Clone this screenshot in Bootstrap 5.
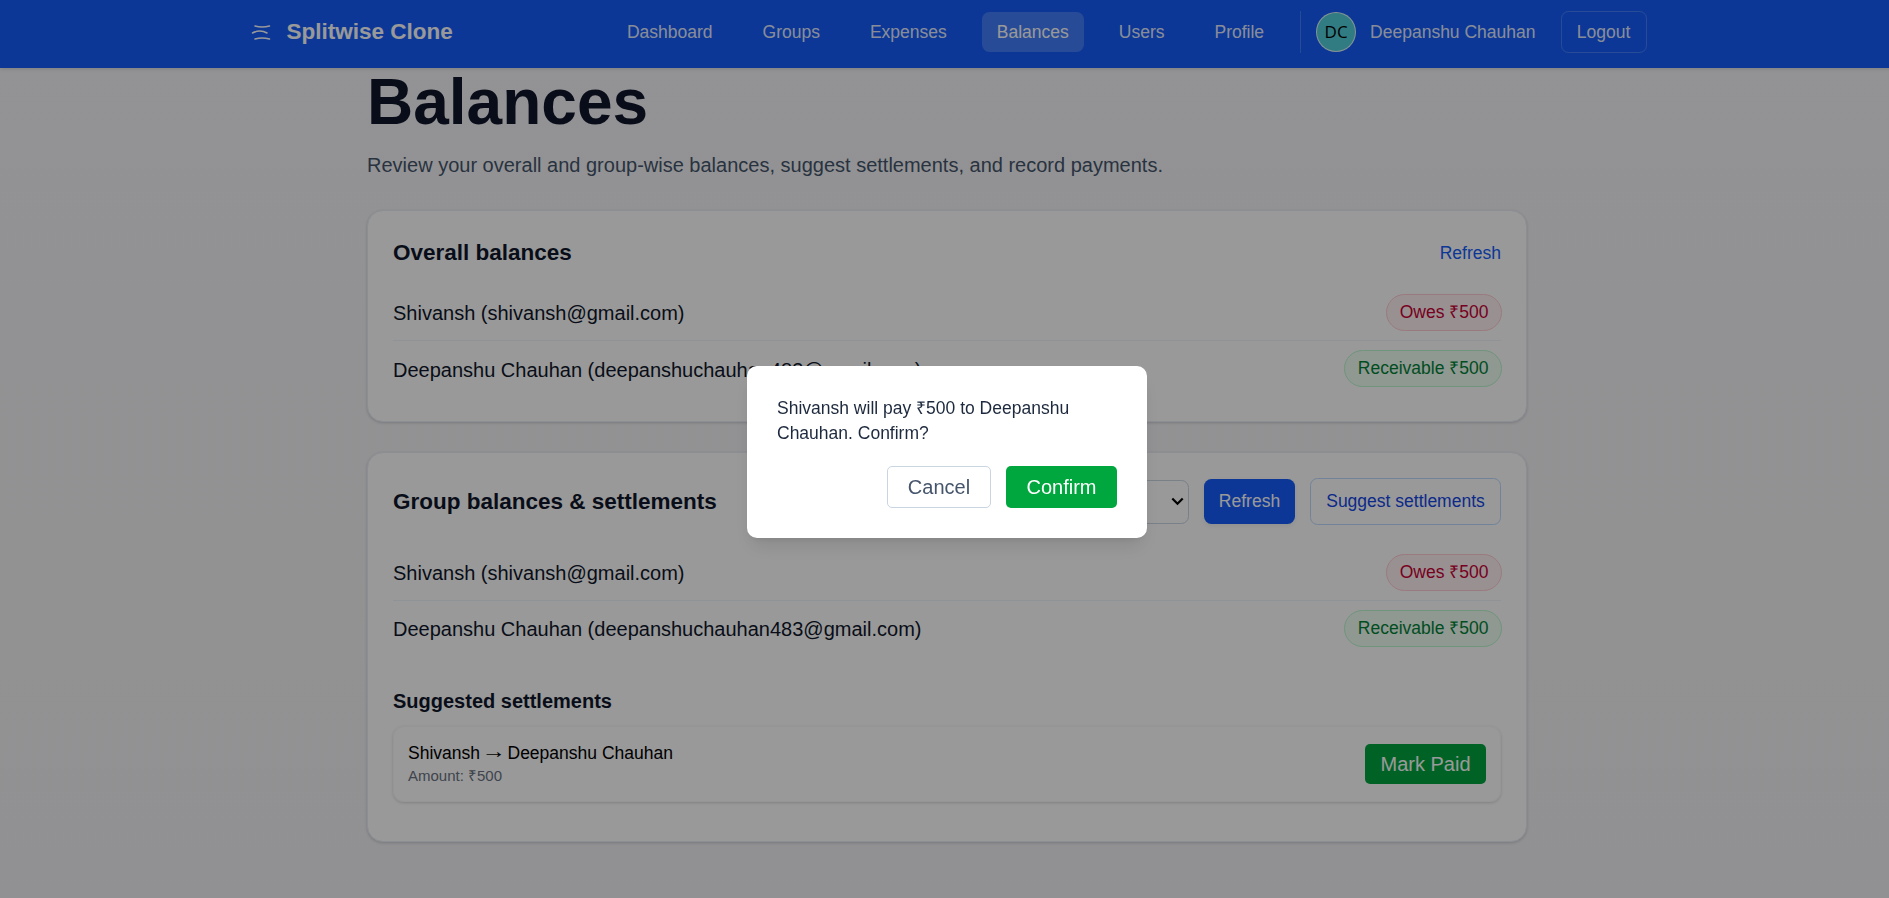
<!DOCTYPE html>
<html lang="en">
<head>
<meta charset="utf-8">
<meta name="viewport" content="width=device-width, initial-scale=1">
<title>Splitwise Clone</title>
<link href="https://cdn.jsdelivr.net/npm/bootstrap@5.3.0/dist/css/bootstrap.min.css" rel="stylesheet">
<style>
html{overflow:hidden}
body{width:1894px;height:898px;overflow:hidden;font-family:"Liberation Sans",Arial,sans-serif;font-size:20px;line-height:30px;color:#0f172b;background:linear-gradient(#f5f5f8,#f2f2f5)}
.topbar{height:68px;background:#155dfc;color:#fff;box-shadow:0 1px 4px rgba(0,0,0,.13);position:relative}
.topbar-inner{width:1401px;padding-right:1px}
.brand{font-size:22.5px;font-weight:700;gap:10px}
.links{gap:20px}
.links a,.user-name,.logout{font-size:17.5px;line-height:25px;color:rgba(255,255,255,.9);text-decoration:none}
.links a{padding:7.5px 15px;border-radius:7.5px}
.links a.active{background:rgba(255,255,255,.2);color:#fff}
.user-box{margin-left:21px;padding-left:15px;border-left:1px solid rgba(255,255,255,.2);height:42px}
.avatar{width:40px;height:40px;padding-bottom:1px;border:1px solid rgba(255,255,255,.8);background:#53cfd9;color:#000;font:400 17px "Open Sans","Noto Sans",sans-serif}
.user-name{margin:0 25px 0 14px}
.logout{background:none;border:1px solid rgba(255,255,255,.2);border-radius:7.5px;width:86px;height:42px;padding:0}
main{width:1160px}
h1{font-size:64px;line-height:70px;font-weight:700;margin:-1px 0 0}
.lede{color:#45556c;margin:13px 0 30px;line-height:30px}
.panel{background:#fff;border-radius:16px;padding:25px;border:1px solid #e8edf5;box-shadow:0 1px 3px rgba(15,23,43,.18)}
h2{font-size:22.5px;line-height:34px;font-weight:700;margin:0}
h3{font-size:20px;line-height:30px;font-weight:700;margin:0}
.entry{height:55px}
.entry+.entry{height:56px;border-top:1px solid #f1f5f9}
.amount{font-size:17.5px;line-height:25px;height:37px;padding:5px 12.5px;border:1px solid;border-radius:19px;margin-right:-1px}
.owes{color:#c70036;background:#fff1f2;border-color:#ffccd3}
.gets{color:#008236;background:#f0fdf4;border-color:#b9f8cf}
.action{font-size:17.5px;line-height:25px;border-radius:7.5px;padding:0;border:0;background:none}
.group-select{width:240px;height:44px;border:1px solid #cad5e2;border-radius:7.5px}
.settle{height:76px;border:1px solid #f6f8fa;border-radius:11px;padding:0 14px;box-shadow:0 1px 3px rgba(0,0,0,.16)}
.settle-text{padding-bottom:2px}
.settle-names{font-size:17.5px;line-height:25px;gap:5px}
.pay-arrow{transform:translateY(-2px) scale(1.4,1.15)}
.big{font-size:20px;line-height:30px;border-radius:5px;padding:0;border:0;color:#fff;background:#00a63e}
.overlay{position:fixed;top:0;left:0;width:1894px;height:898px;background:rgba(0,0,0,.4)}
.dialog-box{width:400px;height:172px;background:#fff;border-radius:10px;padding:30px;box-shadow:0 12px 19px -4px rgba(0,0,0,.1),0 5px 8px -5px rgba(0,0,0,.1);margin-top:6px}
.dialog-box p{font-size:17.5px;line-height:25px;color:#1d293d;margin:0 0 20px}
</style>
</head>
<body>
<header class="topbar">
  <div class="topbar-inner h-100 mx-auto d-flex align-items-center justify-content-between pb-1">
    <div class="brand d-flex align-items-center">
      <svg width="30" height="30" viewBox="0 0 30 30" fill="none" stroke="#fff" stroke-width="1.5" stroke-linecap="round"><path d="M8 9q7 1.800 14.500 0M5.500 16q7.500-3.800 14.500 0M8 22q7-2.200 14.500 0"/></svg>
      <span>Splitwise Clone</span>
    </div>
    <div class="d-flex align-items-center">
      <nav class="links d-flex align-items-center">
        <a href="#">Dashboard</a><a href="#">Groups</a><a href="#">Expenses</a><a href="#" class="active">Balances</a><a href="#">Users</a><a href="#">Profile</a>
      </nav>
      <div class="user-box d-flex align-items-center">
        <span class="avatar rounded-circle d-flex align-items-center justify-content-center">DC</span>
        <span class="user-name">Deepanshu Chauhan</span>
        <button class="logout">Logout</button>
      </div>
    </div>
  </div>
</header>
<main class="mx-auto">
  <h1>Balances</h1>
  <p class="lede">Review your overall and group-wise balances, suggest settlements, and record payments.</p>
  <section class="panel" style="height:212px">
    <div class="d-flex justify-content-between align-items-center" style="height:34px">
      <h2>Overall balances</h2>
      <button class="action" style="color:#155dfc">Refresh</button>
    </div>
    <div style="margin-top:15px">
      <div class="entry d-flex justify-content-between align-items-center"><span>Shivansh (shivansh@gmail.com)</span><span class="amount owes">Owes ₹500</span></div>
      <div class="entry d-flex justify-content-between align-items-center"><span style="padding-top:2px">Deepanshu Chauhan (deepanshuchauhan483@gmail.com)</span><span class="amount gets">Receivable ₹500</span></div>
    </div>
  </section>
  <section class="panel" style="height:390px;margin-top:30px">
    <div class="d-flex justify-content-between align-items-center" style="height:47px">
      <h2>Group balances &amp; settlements</h2>
      <div class="d-flex align-items-center" style="gap:15px">
        <div class="group-select d-flex align-items-center justify-content-end pe-1"><svg width="13" height="9" viewBox="0 0 13 9" fill="none" stroke="#000" stroke-width="2.200"><path d="M1.300 1.500l5.200 5.200 5.200-5.200"/></svg></div>
        <button class="action text-white shadow-sm" style="width:91px;height:45px;background:#155dfc">Refresh</button>
        <button class="action" style="width:191px;height:47px;color:#1447e6;border:1px solid #bedbff">Suggest settlements</button>
      </div>
    </div>
    <div style="margin-top:20px">
      <div class="entry d-flex justify-content-between align-items-center"><span>Shivansh (shivansh@gmail.com)</span><span class="amount owes">Owes ₹500</span></div>
      <div class="entry d-flex justify-content-between align-items-center"><span>Deepanshu Chauhan (deepanshuchauhan483@gmail.com)</span><span class="amount gets">Receivable ₹500</span></div>
    </div>
    <h3 style="margin:30px 0 10px">Suggested settlements</h3>
    <div class="settle d-flex justify-content-between align-items-center">
      <div class="settle-text text-black"><div class="settle-names d-flex"><span>Shivansh</span><span class="pay-arrow">→</span><span>Deepanshu Chauhan</span></div><div style="font-size:15px;line-height:20px;color:#6a7282">Amount: ₹500</div></div>
      <button class="big" style="width:121px;height:40px">Mark Paid</button>
    </div>
  </section>
</main>
<div class="overlay d-flex align-items-center justify-content-center">
  <div class="dialog-box" role="dialog">
    <p>Shivansh will pay ₹500 to Deepanshu Chauhan. Confirm?</p>
    <div class="d-flex justify-content-end" style="gap:15px">
      <button class="big" style="width:104px;height:42px;background:#fff;color:#45556c;border:1px solid #cad5e2">Cancel</button>
      <button class="big" style="width:111px;height:42px">Confirm</button>
    </div>
  </div>
</div>
<script src="https://cdn.jsdelivr.net/npm/bootstrap@5.3.0/dist/js/bootstrap.bundle.min.js"></script>
</body>
</html>
